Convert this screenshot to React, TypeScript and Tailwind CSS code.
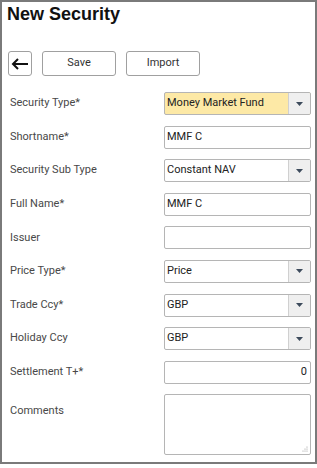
import React from "react";

const Caret = () => (
  <svg width="7" height="4" viewBox="0 0 7 4"><polygon points="0,0 7,0 3.5,4" fill="#3d4b5c" /></svg>
);

function Select({ value, yellow }: { value: string; yellow?: boolean }) {
  return (
    <div className={`flex h-[23px] w-[147px] rounded-[2px] border border-[#b5b5b5] overflow-hidden ${yellow ? "bg-[#fde9a6]" : "bg-white"}`}>
      <div className="flex-1 flex items-center pl-[2px] text-[11px] text-[#222]">{value}</div>
      <div className="w-[22px] flex items-center justify-center bg-[#efefef] border-l border-[#d0d0d0]">
        <Caret />
      </div>
    </div>
  );
}

function Input({ value, right }: { value: string; right?: boolean }) {
  return (
    <div className={`flex h-[23px] w-[147px] items-center rounded-[2px] border border-[#b5b5b5] bg-white pl-[2px] pr-[3px] text-[11px] text-[#222] ${right ? "justify-end" : ""}`}>
      {value}
    </div>
  );
}

function Row({ label, children }: { label: string; children: React.ReactNode }) {
  return (
    <div className="flex items-center h-[23px]">
      <div className="w-[162px] pl-[8px] text-[11px] text-[#484848]">{label}</div>
      {children}
    </div>
  );
}

export default function App() {
  return (
    <div className="w-[317px] h-[468px] bg-white" style={{ fontFamily: "Roboto, 'Liberation Sans', sans-serif" }}>
      <div className="w-[317px] h-[464px] border-2 border-[#7a7a7a] flex flex-col">
        <div className="pl-[5px] pt-[1px] text-[18px] font-bold text-[#111] leading-[22px]" style={{ fontFamily: "'Liberation Sans', Arial, sans-serif" }}>
          New Security
        </div>
        <div className="flex items-center mt-[26px] pl-[6px] gap-[10px]">
          <div className="w-[24px] h-[25px] rounded-[3px] border border-[#a0a0a0] flex items-center justify-center">
            <svg width="18" height="12" viewBox="0 0 18 12"><path d="M17 6H2M7 1L2 6l5 5" stroke="#111" strokeWidth="2" fill="none" /></svg>
          </div>
          <div className="w-[74px] h-[25px] rounded-[3px] border border-[#a0a0a0] flex items-center justify-center text-[11px] text-[#333]">Save</div>
          <div className="w-[74px] h-[25px] rounded-[3px] border border-[#a0a0a0] flex items-center justify-center text-[11px] text-[#333]">Import</div>
        </div>
        <div className="flex flex-col gap-[10.6px] mt-[16px]">
          <Row label="Security Type*"><Select value="Money Market Fund" yellow /></Row>
          <Row label="Shortname*"><Input value="MMF C" /></Row>
          <Row label="Security Sub Type"><Select value="Constant NAV" /></Row>
          <Row label="Full Name*"><Input value="MMF C" /></Row>
          <Row label="Issuer"><Input value="" /></Row>
          <Row label="Price Type*"><Select value="Price" /></Row>
          <Row label="Trade Ccy*"><Select value="GBP" /></Row>
          <Row label="Holiday Ccy"><Select value="GBP" /></Row>
          <Row label="Settlement T+*"><Input value="0" right /></Row>
          <div className="flex items-start">
            <div className="w-[162px] pl-[8px] pt-[9px] text-[11px] text-[#484848]">Comments</div>
            <div className="relative w-[147px] h-[61px] rounded-[2px] border border-[#b5b5b5] bg-white">
              <svg className="absolute right-[2px] bottom-[2px]" width="6" height="6" viewBox="0 0 6 6">
                <circle cx="5" cy="1" r="0.6" fill="#999" />
                <circle cx="3" cy="3" r="0.6" fill="#999" />
                <circle cx="5" cy="3" r="0.6" fill="#999" />
                <circle cx="1" cy="5" r="0.6" fill="#999" />
                <circle cx="3" cy="5" r="0.6" fill="#999" />
                <circle cx="5" cy="5" r="0.6" fill="#999" />
              </svg>
            </div>
          </div>
        </div>
      </div>
    </div>
  );
}
